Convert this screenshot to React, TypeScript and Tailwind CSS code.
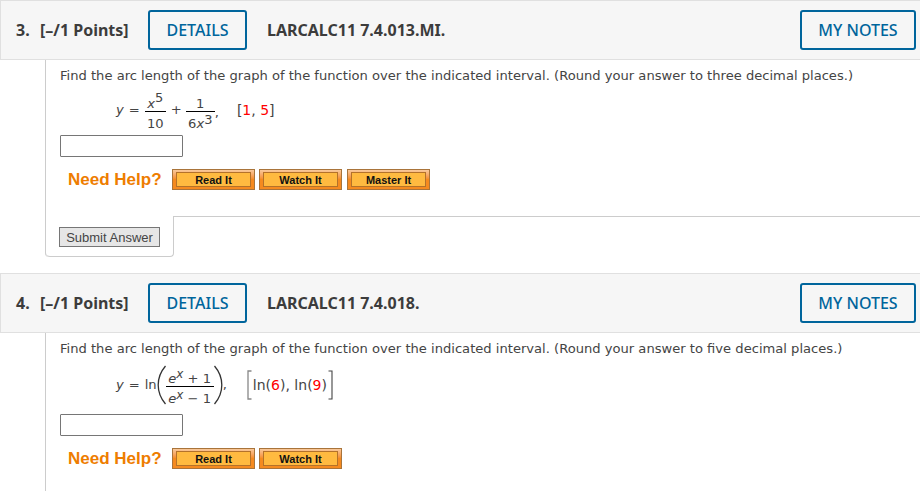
import type { ReactNode } from 'react'

const bodyFont = "font-['DejaVu_Sans',Verdana,sans-serif]"

function QuestionHeader({ num, code }: { num: string; code: string }) {
  return (
    <div className="flex h-[60px] items-center border-y border-l border-[#e0e0e0] bg-[#f6f6f6] pr-[4px] pl-[15px] font-['Noto_Sans',sans-serif] text-[#3c3c3c]">
      <span className="w-[24px] text-[16px] leading-none font-bold">{num}</span>
      <span className="w-[108px] text-[16px] font-bold">[–/1 Points]</span>
      <button className="h-[40px] w-[99px] rounded-[3px] border-2 border-[#00659c] text-[16px] font-medium text-[#00659c]">
        DETAILS
      </button>
      <span className="ml-[20px] text-[16px] font-bold">{code}</span>
      <button className="ml-auto h-[40px] w-[116px] rounded-[3px] border-2 border-[#00659c] text-[16px] font-medium text-[#00659c]">
        MY NOTES
      </button>
    </div>
  )
}

function Fraction({ top, bottom, className }: { top: ReactNode; bottom: ReactNode; className: string }) {
  return (
    <span className={`inline-flex flex-col items-center ${className}`}>
      <span className="flex h-[20px] items-end leading-none">{top}</span>
      <span className="my-[1px] h-px w-full bg-black" />
      <span className="flex h-[17px] items-end leading-none">{bottom}</span>
    </span>
  )
}

function Red({ children }: { children: ReactNode }) {
  return <span className="text-[#f00]">{children}</span>
}

function AnswerInput() {
  return <div className="h-[22px] w-[123px] rounded-[1px] border border-[#767676] bg-white" />
}

function HelpButton({ label }: { label: string }) {
  return (
    <div className="h-[21px] w-[83px] border border-[#a9743a] bg-gradient-to-b from-[#f8c89a] via-[#f58a1f] to-[#f58a1f] px-[3px] py-[2px]">
      <div className="flex h-[15px] items-center justify-center border border-[#b4722a] bg-[#ffba40] pt-[1px] font-['Liberation_Sans',Arial,sans-serif] text-[11px] font-bold text-[#111]">
        {label}
      </div>
    </div>
  )
}

function NeedHelp({ children }: { children: ReactNode }) {
  return (
    <div className="flex items-center pl-[8px]">
      <span className="mr-[10px] w-[94px] font-['Liberation_Sans',Arial,sans-serif] text-[17px] leading-[21px] font-bold whitespace-nowrap text-[#ee7d00]">
        Need Help?
      </span>
      {children}
    </div>
  )
}

export default function App() {
  return (
    <div className={`h-[491px] w-[920px] overflow-hidden bg-white ${bodyFont} text-[13.1px] text-[#444]`}>
      <QuestionHeader num="3." code="LARCALC11 7.4.013.MI." />
      <div className="ml-[45px] rounded-bl-[4px] border-l border-[#ccc]">
        <div className="h-[156px] pt-[8px] pl-[14px]">
          <p className="leading-[16px] whitespace-nowrap">
            Find the arc length of the graph of the function over the indicated interval. (Round your answer to three decimal places.)
          </p>
          <div className="mt-[3px] flex h-[46px] items-center pl-[56px]">
            <span className="italic">y</span>
            <span className="mx-[5px]">=</span>
            <Fraction
              className="w-[21px]"
              top={<span><i>x</i><sup className="-top-[6px] align-baseline text-[13px]">5</sup></span>}
              bottom="10"
            />
            <span className="mr-[4px] ml-[5px]">+</span>
            <Fraction
              className="w-[29px]"
              top="1"
              bottom={<span>6<i>x</i><sup className="-top-[4px] align-baseline text-[13px]">3</sup></span>}
            />
            <span className="mt-[5px]">,</span>
            <span className="ml-[18px] text-[14px]">[<Red>1</Red>, <Red>5</Red>]</span>
          </div>
          <div className="mt-[2px]"><AnswerInput /></div>
          <div className="mt-[12px]">
            <NeedHelp>
              <div className="flex gap-[4px]">
                <HelpButton label="Read It" />
                <HelpButton label="Watch It" />
                <div className="ml-[1px]"><HelpButton label="Master It" /></div>
              </div>
            </NeedHelp>
          </div>
        </div>
        <div className="flex">
          <div className="h-[41px] w-[128px] rounded-b-[4px] border-r border-b border-[#ccc] pt-[11px] pl-[13px]">
            <button className="flex h-[20px] w-[101px] items-center justify-center border border-[#767676] bg-[#e6e6e6] pt-[1px] font-['Liberation_Sans',Arial,sans-serif] text-[13px] text-[#444]">
              Submit Answer
            </button>
          </div>
          <div className="h-px flex-1 bg-[#ccc]" />
        </div>
      </div>

      <div className="mt-[16px]">
        <QuestionHeader num="4." code="LARCALC11 7.4.018." />
      </div>
      <div className="ml-[45px] h-[160px] border-l border-[#ccc] pt-[8px] pl-[14px]">
        <p className="leading-[16px] whitespace-nowrap">
          Find the arc length of the graph of the function over the indicated interval. (Round your answer to five decimal places.)
        </p>
        <div className="mt-[3px] flex h-[50px] items-center pl-[56px]">
          <span className="italic">y</span>
          <span className="mx-[5px]">=</span>
          <span>ln</span>
          <svg width="9" height="40" viewBox="0 0 9 40" fill="none" className="text-[#333]">
            <path d="M8.5 1C2.5 8 1.2 14 1.2 20S2.5 32 8.5 39" stroke="currentColor" strokeWidth="1.3" />
          </svg>
          <Fraction
            className="w-[48px]"
            top={<span className="whitespace-pre"><i>e</i><sup className="-top-[5px] align-baseline text-[12px]"><i>x</i></sup> + 1</span>}
            bottom={<span className="whitespace-pre"><i>e</i><sup className="-top-[4px] align-baseline text-[12px]"><i>x</i></sup> − 1</span>}
          />
          <svg width="9" height="40" viewBox="0 0 9 40" fill="none" className="text-[#333]">
            <path d="M0.5 1C6.5 8 7.8 14 7.8 20S6.5 32 0.5 39" stroke="currentColor" strokeWidth="1.3" />
          </svg>
          <span>,</span>
          <span className="ml-[20px] flex items-center text-[14px]">
            <svg width="5" height="30" viewBox="0 0 5 30" fill="none" className="text-[#888]">
              <path d="M4.5 1H1V29H4.5" stroke="currentColor" strokeWidth="1.3" />
            </svg>
            <span className="mx-[1px]">ln(<Red>6</Red>), ln(<Red>9</Red>)</span>
            <svg width="5" height="30" viewBox="0 0 5 30" fill="none" className="text-[#444]">
              <path d="M0.5 1H4V29H0.5" stroke="currentColor" strokeWidth="1.1" />
            </svg>
          </span>
        </div>
        <div className="mt-[4px]"><AnswerInput /></div>
        <div className="mt-[12px]">
          <NeedHelp>
            <div className="flex gap-[4px]">
              <HelpButton label="Read It" />
              <HelpButton label="Watch It" />
            </div>
          </NeedHelp>
        </div>
      </div>
    </div>
  )
}
